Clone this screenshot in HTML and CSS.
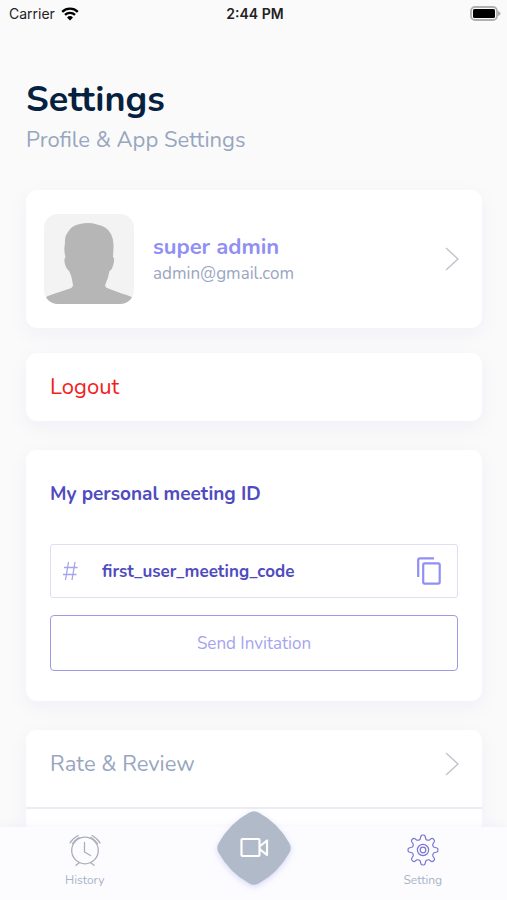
FILE: index.html
```html
<!DOCTYPE html>
<html lang="en">
<head>
<meta charset="utf-8">
<meta name="viewport" content="width=device-width, initial-scale=1">
<title>Settings</title>
<link rel="stylesheet" href="styles.css">
</head>
<body>
<div class="app">
  <header class="status">
    <div class="status-left">
      <span>Carrier</span>
      <svg width="18" height="14" viewBox="0 0 18 14" aria-hidden="true">
        <path d="M1.2 4.8a11.2 11.2 0 0 1 15.6 0M4 7.900a7.200 7.200 0 0 1 10 0" fill="none" stroke="#000" stroke-width="2.300"/>
        <path d="M6 10.400a4.400 4.400 0 0 1 6 0L9 13.600z"/>
      </svg>
    </div>
    <strong class="status-time">2:44 PM</strong>
    <svg class="battery" width="31" height="16" viewBox="0 0 31 16" aria-hidden="true">
      <rect x="1" y="1" width="26" height="13" rx="4" fill="#fafafa" stroke="#b0b0b0" stroke-width="1.800"/>
      <rect x="3" y="3" width="22" height="9" rx="1.500"/>
      <path d="M28 5q2.500 .8 2.500 2.500T28 10z" fill="#b0b0b0"/>
    </svg>
  </header>

  <main class="content">
    <div class="heading">
      <h1>Settings</h1>
      <p>Profile &amp; App Settings</p>
    </div>

    <a class="card profile" href="#profile">
      <svg class="avatar" viewBox="0 0 90 90" role="img" aria-label="Profile photo">
        <rect width="90" height="90" fill="#f3f3f3"/>
        <path d="M0 84.500Q3 82 8 80.500L23 75.500Q29 74 29 71Q27.500 61 25 57Q21.500 54 20.500 48Q20 44 21.500 43Q19.500 36 21 29Q20.500 22 24 18Q28 11 36 10Q45 8 53 10.500Q63 12 67 20Q70 26 69.500 33L69 43Q71 44 69.500 50Q68 56 65.500 57Q64 65 61.500 70Q60.500 73 63 74L79 80Q87 82 90 84.500V90H0Z" fill="#b6b6b6"/>
      </svg>
      <span class="profile-text">
        <strong>super admin</strong>
        <span>admin@gmail.com</span>
      </span>
      <svg class="chevron" viewBox="0 0 14 24" aria-hidden="true"><path d="M1 1l12 11L1 23"/></svg>
    </a>

    <button class="card logout" type="button">Logout</button>

    <section class="card meeting">
      <label for="meeting-id">My personal meeting ID</label>
      <div class="field">
        <svg width="15" height="20" viewBox="0 0 15 20" aria-hidden="true">
          <path d="M5.500 1L2.500 19M12 1L9 19M1 6.500h13.500M0 13.500h13.500" fill="none" stroke="#a6a4ee" stroke-width="1.300"/>
        </svg>
        <input id="meeting-id" type="text" value="first_user_meeting_code" readonly>
        <button class="copy" type="button" aria-label="Copy meeting ID">
          <svg width="24" height="28" viewBox="0 0 24 28" aria-hidden="true">
            <path d="M17 1.300H3Q1.200 1.300 1.200 3v17"/>
            <rect x="6.200" y="6.300" width="16.500" height="20.300" rx="1.500"/>
          </svg>
        </button>
      </div>
      <button class="invite" type="button">Send Invitation</button>
    </section>

    <section class="card more">
      <a class="row" href="#review">
        <span>Rate &amp; Review</span>
        <svg class="chevron" viewBox="0 0 14 24" aria-hidden="true"><path d="M1 1l12 11L1 23"/></svg>
      </a>
    </section>
  </main>

  <nav class="tabs">
    <a class="tab" href="#history">
      <svg width="32" height="32" viewBox="0 0 32 32" fill="none" stroke="#a9aeba" stroke-width="1.300" stroke-linecap="round" aria-hidden="true">
        <circle cx="16" cy="16.500" r="13.300"/>
        <path d="M15.500 8.500v9.500l6 3.500M10.500 28.500L7 31.300M21.500 28.500L25 31.300M1 9Q3.500 4.500 9 1.500M3.500 9.500Q5.500 6.500 10 3.500M31 9Q28.500 4.500 23 1.500M28.500 9.500Q26.500 6.500 22 3.500"/>
      </svg>
      <span>History</span>
    </a>
    <button class="record" type="button" aria-label="Start meeting">
      <svg width="74" height="74" viewBox="0 0 74 74" aria-hidden="true">
        <path d="M32 1.800Q37 -1.200 42 1.800Q61 12 72.200 32Q75.200 37 72.200 42Q61 62 42 72.200Q37 75.200 32 72.200Q13 62 1.800 42Q-1.200 37 1.800 32Q13 12 32 1.800Z" fill="#b0bac9"/>
        <g fill="none" stroke="#fff" stroke-width="2.200" stroke-linejoin="round">
          <rect x="24.500" y="28" width="18" height="17" rx="1"/>
          <path d="M42.500 35.500L50 29.500V44L42.500 38"/>
        </g>
      </svg>
    </button>
    <a class="tab" href="#settings" aria-current="page">
      <svg width="32" height="32" viewBox="0 0 32 32" fill="none" stroke="#7975d4" stroke-width="1.200" stroke-linejoin="round" aria-hidden="true">
        <path d="M13 5.500L14 2Q14.300 1 16 1T18 2L19 5.500Q20.500 6.500 22 6.200L24.500 4.600Q25.500 4 26.700 5.300T27.400 7.500L25.800 10Q25.500 11.500 26.500 13L30 14Q31 14.300 31 16T30 18L26.500 19Q25.500 20.500 25.800 22L27.400 24.500Q28 25.500 26.700 26.700T24.500 27.400L22 25.800Q20.500 25.500 19 26.500L18 30Q17.700 31 16 31T14 30L13 26.500Q11.500 25.500 10 25.800L7.500 27.400Q6.500 28 5.300 26.700T4.600 24.500L6.200 22Q6.500 20.500 5.500 19L2 18Q1 17.700 1 16T2 14L5.500 13Q6.500 11.500 6.200 10L4.600 7.500Q4 6.500 5.300 5.300T7.500 4.600L10 6.200Q11.500 6.500 13 5.500Z"/>
        <circle cx="16" cy="16" r="5.600"/>
        <circle cx="16" cy="16" r="2.800"/>
      </svg>
      <span>Setting</span>
    </a>
  </nav>
</div>
</body>
</html>
```
FILE: styles.css
```css
* {
  box-sizing: border-box;
}

body {
  margin: 0;
  background: #fafafa;
  color: #98a6bf;
  font-family: Nunito, Lato, sans-serif;
}

a {
  color: inherit;
  text-decoration: none;
}

button,
input {
  margin: 0;
  font: inherit;
}

button {
  cursor: pointer;
}

svg {
  display: block;
  flex: none;
}

.app {
  display: flex;
  flex-direction: column;
  height: 100vh;
}

.status {
  display: grid;
  grid-template-columns: 1fr auto 1fr;
  align-items: center;
  flex: none;
  height: 27px;
  padding: 0 6px 0 9px;
  color: #222;
  font-family: Inter, sans-serif;
  font-size: 14px;
}

.status-left {
  display: flex;
  align-items: center;
  gap: 6px;
}

.status-time {
  font-weight: 600;
}

.battery {
  justify-self: end;
}

.content {
  display: flex;
  flex: 1;
  flex-direction: column;
  min-height: 0;
  overflow: hidden;
  padding: 50px 25px 0 26px;
}

.heading {
  flex: none;
  margin-bottom: 33px;
}

h1 {
  margin: 0;
  color: #06203f;
  font-size: 36px;
  font-weight: 700;
  line-height: 46px;
}

.heading p {
  margin: 0;
  font-size: 22px;
  line-height: 34px;
}

.card {
  flex: none;
  border: 0;
  border-radius: 11px;
  background: #fff;
  box-shadow: 0 6px 18px rgba(110, 110, 220, 0.07);
}

.profile {
  display: flex;
  align-items: center;
  gap: 19px;
  padding: 24px 23px 24px 18px;
}

.avatar {
  width: 90px;
  height: 90px;
  border-radius: 14px;
}

.profile-text {
  display: flex;
  flex: 1;
  flex-direction: column;
  padding-top: 2px;
  font-size: 17px;
  line-height: 26px;
}

.profile-text strong {
  color: #918ff3;
  font-size: 22px;
  line-height: 28px;
}

.chevron {
  width: 14px;
  height: 24px;
  fill: none;
  stroke: #bdc1c9;
  stroke-width: 1.3;
}

.logout {
  margin-top: 25px;
  padding: 18px 24px;
  color: #f21d1d;
  font-size: 22px;
  line-height: 32px;
  text-align: left;
}

.meeting {
  display: flex;
  flex-direction: column;
  margin-top: 29px;
  padding: 30px 24px;
}

.meeting label {
  margin-bottom: 36px;
  color: #4f4cc0;
  font-size: 19px;
  font-weight: 700;
  line-height: 28px;
}

.field {
  display: flex;
  align-items: center;
  height: 54px;
  margin-bottom: 17px;
  padding: 0 16px 0 12px;
  border: 1px solid #dedef5;
  border-radius: 3px;
}

.field input {
  flex: 1;
  min-width: 0;
  padding: 0 24px;
  border: 0;
  outline: 0;
  background: transparent;
  color: #4f4cc0;
  font-size: 17px;
  font-weight: 700;
}

.copy {
  padding: 0;
  border: 0;
  background: none;
}

.copy svg {
  fill: none;
  stroke: #918ff3;
  stroke-width: 2.2;
}

.invite {
  height: 56px;
  padding: 0;
  border: 1px solid #9d9be8;
  border-radius: 4px;
  background: #fff;
  color: #a6a4ee;
  font-size: 17px;
}

.more {
  flex: 1 0 auto;
  margin-top: 29px;
  border-radius: 11px 11px 0 0;
}

.row {
  display: flex;
  align-items: center;
  justify-content: space-between;
  height: 79px;
  padding: 0 23px 10px 24px;
  border-bottom: 2px solid #ececf2;
  font-size: 22px;
}

.tabs {
  position: relative;
  display: grid;
  grid-template-columns: 1fr auto 1fr;
  align-items: start;
  flex: none;
  height: 73px;
  background: #fcfcff;
  box-shadow: 0 -3px 8px rgba(110, 110, 220, 0.05);
}

.tab {
  display: flex;
  flex-direction: column;
  align-items: center;
  gap: 5px;
  padding-top: 7px;
  color: #a9b3c5;
  font-size: 12px;
  line-height: 18px;
}

.tab:first-child {
  padding-right: 47px;
}

.tab:last-child {
  padding-left: 48px;
}

.record {
  margin-top: -16px;
  padding: 0;
  border: 0;
  background: none;
  filter: drop-shadow(0 2px 3px rgba(110, 110, 220, 0.25));
}
```
